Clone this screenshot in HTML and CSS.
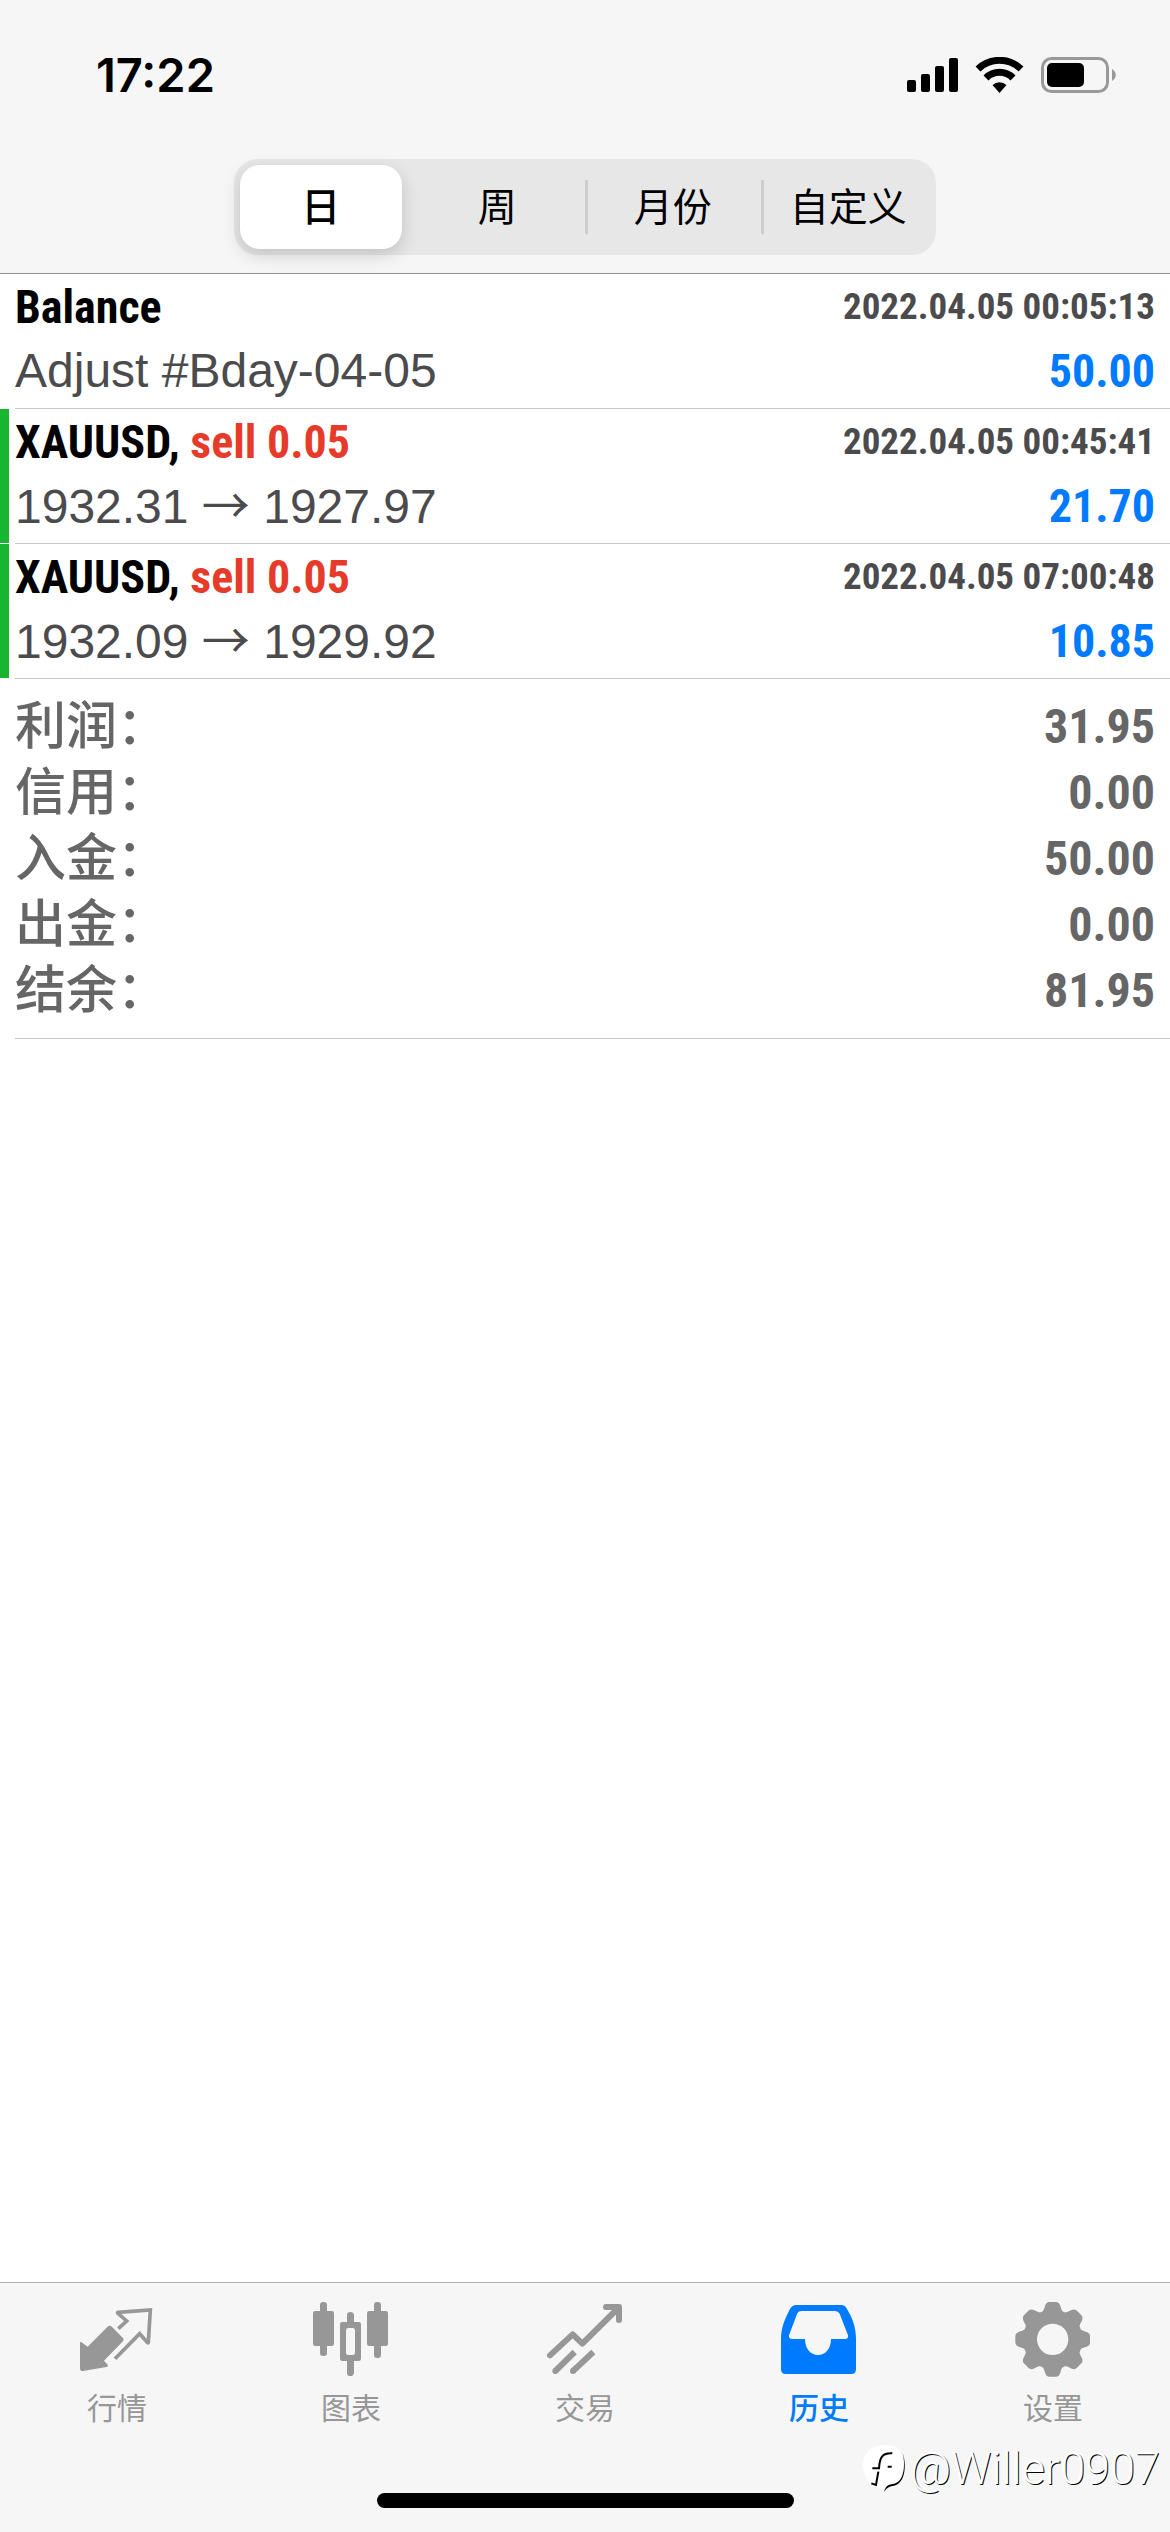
FILE: index.html
```html
<!DOCTYPE html>
<html lang="zh-CN">
<head>
<meta charset="utf-8">
<meta name="viewport" content="width=device-width, initial-scale=1">
<title>历史</title>
<link rel="stylesheet" href="styles.css">
</head>
<body>
<div class="app">
  <header class="top">
    <div class="status">
      <span class="clock">17:22</span>
      <span class="indicators">
        <svg class="signal" viewBox="0 0 52 36" aria-hidden="true"><rect x="0" y="23" width="9" height="12" rx="2"/><rect x="14" y="17" width="9" height="18" rx="2"/><rect x="28" y="9" width="9" height="26" rx="2"/><rect x="42" y="1" width="9" height="34" rx="2"/></svg>
        <svg class="wifi" viewBox="0 0 50 36" aria-hidden="true"><path d="M3 12a31 31 0 0 1 43 0" fill="none" stroke="#000" stroke-width="7"/><path d="M11 21a19 19 0 0 1 27 0" fill="none" stroke="#000" stroke-width="7"/><path d="M17.500 28a10 10 0 0 1 14 0l-7 8z"/></svg>
        <svg class="battery" viewBox="0 0 76 36" aria-hidden="true"><rect x="1.500" y="1.500" width="65" height="33" rx="9" fill="none" stroke="#999" stroke-width="3"/><rect x="6" y="6" width="37" height="24" rx="5"/><path d="M71 12c5 3 5 9 0 12z" fill="#999"/></svg>
      </span>
    </div>
    <nav class="segments">
      <button class="segment selected" type="button">日</button>
      <button class="segment" type="button">周</button>
      <button class="segment divided" type="button">月份</button>
      <button class="segment divided" type="button">自定义</button>
    </nav>
  </header>

  <main class="history">
    <article class="deal">
      <div class="line"><h2 class="symbol">Balance</h2><time class="date">2022.04.05 00:05:13</time></div>
      <div class="line"><span class="detail">Adjust #Bday-04-05</span><span class="profit">50.00</span></div>
    </article>
    <article class="deal won">
      <div class="line"><h2 class="symbol">XAUUSD, <span class="sell">sell 0.05</span></h2><time class="date">2022.04.05 00:45:41</time></div>
      <div class="line"><span class="detail">1932.31 <span class="arrow">→</span> 1927.97</span><span class="profit">21.70</span></div>
    </article>
    <article class="deal won">
      <div class="line"><h2 class="symbol">XAUUSD, <span class="sell">sell 0.05</span></h2><time class="date">2022.04.05 07:00:48</time></div>
      <div class="line"><span class="detail">1932.09 <span class="arrow">→</span> 1929.92</span><span class="profit">10.85</span></div>
    </article>
    <dl class="summary">
      <div class="total"><dt>利润：</dt><dd>31.95</dd></div>
      <div class="total"><dt>信用：</dt><dd>0.00</dd></div>
      <div class="total"><dt>入金：</dt><dd>50.00</dd></div>
      <div class="total"><dt>出金：</dt><dd>0.00</dd></div>
      <div class="total"><dt>结余：</dt><dd>81.95</dd></div>
    </dl>
  </main>

  <footer class="bottom">
    <nav class="tabs">
      <a class="tab" href="#quotes">
        <svg viewBox="0 0 240 240" aria-hidden="true"><path d="M11 128 32 143 93 82q5-5 10 0l32 32q5 5 0 10L78 182l12 13q2 3-2 4l-70 12q-7 1-7-6z" fill="currentColor" stroke="currentColor" stroke-width="4" stroke-linejoin="round"/><path d="M124 86l25-23-27-24q-1-2 1-2l97-7-6 97q0 3-2 1l-24-27-74 75" fill="none" stroke="currentColor" stroke-width="11"/></svg>
        行情
      </a>
      <a class="tab" href="#charts">
        <svg viewBox="0 0 240 240" fill="currentColor" aria-hidden="true"><rect x="6" y="33" width="63" height="105" rx="7"/><rect x="27" y="6" width="21" height="162" rx="9"/><path fill-rule="evenodd" d="M94 66h49q7 0 7 7v103q0 7-7 7H94q-7 0-7-7V73q0-7 7-7zm18 18q-7 0-7 7v67q0 7 7 7h13q7 0 7-7V91q0-7-7-7z"/><path d="M108 66V46q0-10 10-10t11 10v20zM108 183v35q0 10 10 10t11-10v-35z"/><rect x="168" y="33" width="63" height="105" rx="7"/><rect x="189" y="6" width="21" height="168" rx="9"/></svg>
        图表
      </a>
      <a class="tab" href="#trade">
        <svg viewBox="0 0 240 240" fill="none" stroke="currentColor" stroke-width="18" aria-hidden="true"><path d="M15 166l68-63 29 28L220 24" stroke-linecap="round" stroke-linejoin="round"/><path d="M183 21h39v39" stroke-linecap="round" stroke-linejoin="round"/><path d="M31 213l58-57M84 213l61-57"/><g fill="currentColor" stroke="none"><circle cx="31" cy="213" r="9"/><circle cx="84" cy="213" r="9"/></g></svg>
        交易
      </a>
      <a class="tab active" href="#history">
        <svg viewBox="0 0 240 240" fill="currentColor" aria-hidden="true"><path fill-rule="evenodd" d="M6 118C6 80 20 52 33 27q7-12 19-12h136q10 0 16 12c15 25 27 52 27 91v90q0 14-14 14H20q-14 0-14-14zm24-12q-2 11 10 11h38c0 29 16 48 39 48s39-19 39-48h42q11 0 9-11l-25-65q-4-8-14-8H68q-9 0-13 7z"/></svg>
        历史
      </a>
      <a class="tab" href="#settings">
        <svg viewBox="0 0 240 240" aria-hidden="true"><defs><path id="tooth" d="M80 41c12-5 13-14 16-23q4-12 13-12h20q9 0 13 12c3 9 4 18 16 23z"/></defs><circle cx="119" cy="118" r="68" fill="none" stroke="currentColor" stroke-width="42"/><g fill="currentColor"><use href="#tooth"/><use href="#tooth" transform="rotate(45 119 118)"/><use href="#tooth" transform="rotate(90 119 118)"/><use href="#tooth" transform="rotate(135 119 118)"/><use href="#tooth" transform="rotate(180 119 118)"/><use href="#tooth" transform="rotate(225 119 118)"/><use href="#tooth" transform="rotate(270 119 118)"/><use href="#tooth" transform="rotate(315 119 118)"/></g></svg>
        设置
      </a>
    </nav>
    <div class="home-bar"></div>
    <div class="watermark">
      <svg viewBox="0 0 132 156" aria-hidden="true"><path d="M60 6C90 4 120 14 120 62c0 42-16 58-36 62-12 4-16 8-20 14l-30-6C16 120 0 96 0 64 0 30 26 8 60 6z" fill="#fff"/><path d="M88 31c-28-2-38 10-40 45H28M46 86l-7 40-14-5M74 71h12" fill="none" stroke="#000" stroke-width="6"/><path d="M119 30c8 30 7 84-25 92-18 2-26 6-31 25 8-12 14-17 30-19C130 120 130 60 119 30z"/></svg>
      <span>@Willer0907</span>
    </div>
  </footer>
</div>
</body>
</html>
```
FILE: styles.css
```css
* { box-sizing: border-box; }

body {
  margin: 0;
  background: #fff;
  color: #000;
  font-family: "Liberation Sans", "Noto Sans CJK SC", sans-serif;
}

.app {
  display: flex;
  flex-direction: column;
  min-height: 100vh;
}

.top {
  background: #f6f6f6;
  border-bottom: 1px solid #919193;
  padding-bottom: 18px;
}

.status {
  display: flex;
  justify-content: space-between;
  align-items: center;
  height: 159px;
  padding: 0 53px 10px 96px;
}

.clock { font: 600 47px/48px Inter, sans-serif; }

.indicators {
  display: flex;
  align-items: center;
  gap: 16px;
}

.signal { width: 52px; height: 36px; }
.wifi { width: 50px; height: 36px; }
.battery { width: 76px; height: 36px; }

.segments {
  display: grid;
  grid-template-columns: repeat(4, 1fr);
  width: 60%;
  height: 96px;
  margin: 0 auto;
  border-radius: 24px;
  background: #e7e7e8;
}

.segment {
  border: 0;
  padding: 2px 0 0;
  background: none;
  color: #000;
  font: 400 39px/48px "Liberation Sans", "Noto Sans CJK SC", sans-serif;
}

.selected {
  margin: 6px 8px 6px 6px;
  border-radius: 20px;
  background: #fff;
  font-weight: 500;
  box-shadow: 0 6px 18px rgba(0, 0, 0, .16);
}

.divided {
  background: linear-gradient(#cececf, #cececf) left center / 3px 54px no-repeat;
}

.history { flex: 1; }

.deal {
  position: relative;
  display: grid;
  gap: 4px;
  padding: 3px 15px 8px;
}

.deal::after {
  content: "";
  position: absolute;
  left: 15px;
  right: 0;
  bottom: 0;
  border-bottom: 1px solid #c8c8ca;
}

.won::before {
  content: "";
  position: absolute;
  left: 0;
  top: 0;
  bottom: 1px;
  width: 9px;
  background: #17b530;
}

.line {
  display: flex;
  justify-content: space-between;
  align-items: center;
  height: 60px;
}

.symbol, .date, .profit, dd {
  font-family: "Roboto Condensed", "Liberation Sans Narrow", sans-serif;
  font-weight: 700;
}

.symbol { margin: 0; font-size: 46px; line-height: 54px; }
.sell { color: #e63b2a; }
.date { color: #4b4b4e; font-size: 37px; line-height: 54px; }
.detail { color: #4b4b4e; font-size: 48px; line-height: 54px; }
.arrow { font-family: "Noto Sans CJK SC", sans-serif; line-height: 1; }
.profit { color: #007aff; font-size: 46px; line-height: 54px; }

.summary {
  margin: 0 0 0 15px;
  padding: 15px 15px 14px 0;
  border-bottom: 1px solid #c8c8ca;
  color: #666;
}

.total {
  display: flex;
  justify-content: space-between;
  align-items: center;
  height: 66px;
}

dt { font: 500 51px/66px "Liberation Sans", "Noto Sans CJK SC", sans-serif; }
dd { margin: 0; font-size: 48px; line-height: 66px; }

.bottom {
  position: relative;
  display: flex;
  flex-direction: column;
  align-items: center;
  background: #f6f6f6;
  border-top: 1px solid #b0b0b1;
  padding: 17px 0 24px;
}

.tabs {
  display: grid;
  grid-template-columns: repeat(5, 1fr);
  width: 100%;
}

.tab {
  display: flex;
  flex-direction: column;
  align-items: center;
  gap: 6px;
  color: #979797;
  text-decoration: none;
  font: 400 30px/40px "Noto Sans CJK SC", sans-serif;
}

.tab svg { width: 80px; height: 80px; }
.active { color: #007aff; font-weight: 500; }

.home-bar {
  width: 417px;
  height: 15px;
  margin-top: 67px;
  border-radius: 8px;
  background: #000;
}

.watermark {
  position: absolute;
  right: 10px;
  bottom: 36px;
  display: flex;
  align-items: center;
  gap: 3px;
  color: #fff;
  font: 300 45px/54px Roboto, sans-serif;
  text-shadow: 1px 1px 0 #000;
}

.watermark svg { width: 44px; height: 52px; }
```
